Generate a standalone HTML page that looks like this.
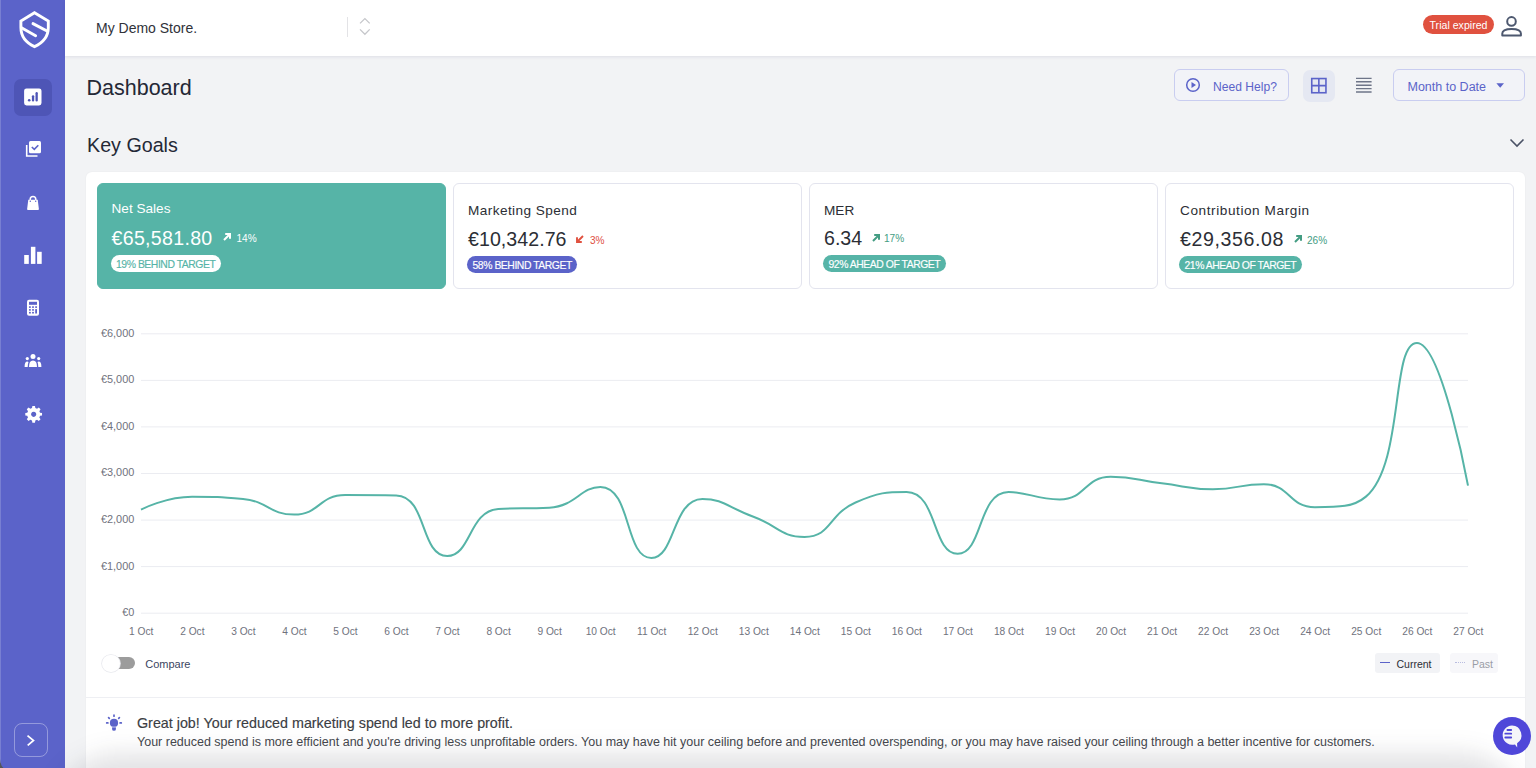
<!DOCTYPE html>
<html><head><meta charset="utf-8">
<style>
*{box-sizing:border-box;margin:0;padding:0}
html,body{width:1536px;height:768px;overflow:hidden;background:#f2f3f5;font-family:"Liberation Sans",sans-serif;color:#2c2e35}
#side{position:absolute;left:0;top:0;width:65px;height:768px;background:#5b63c9}
#hdr{position:absolute;left:65px;top:0;width:1471px;height:56px;background:#fff;box-shadow:0 1px 3px rgba(50,50,110,.10)}
.nav{position:absolute;left:14px;width:38px;height:38px;border-radius:7px}
.nav svg{position:absolute;left:10px;top:10px}
.nav.active{background:#4e55b6}
.t{position:absolute;white-space:nowrap;line-height:1}
.panel{position:absolute;left:86px;top:172px;width:1439px;height:620px;background:#fff;border-radius:6px;box-shadow:0 0 2px rgba(0,0,0,.05)}
.card{position:absolute;top:183px;width:348.6px;height:106px;border-radius:6px;border:1px solid #e3e4ee;background:#fff}
.card.g{background:#56b4a7;border-color:#56b4a7}
.badge{position:absolute;top:254.8px;height:17px;border-radius:9px;font-size:10.4px;line-height:19px;padding:0 5.5px;white-space:nowrap;letter-spacing:-0.45px;-webkit-text-stroke:0.15px currentColor}
.btn{position:absolute;top:69px;height:32px;border:1px solid #c9cdf0;border-radius:6px;background:#f2f3f8}
</style></head><body>
<div id="side">
 <svg style="position:absolute;left:13px;top:8px" width="40" height="44" viewBox="0 0 40 44">
  <path d="M21.5 4.7 L35.3 13.1 L35.3 19.5 C35.3 28.3 30.5 34.5 21.5 38.6 C12.5 34.5 7.9 28.3 7.9 19.5 L7.9 13.1 Z" fill="none" stroke="#fff" stroke-width="2.9" stroke-linejoin="miter"/>
  <path d="M20 15.6 L34.5 23.3 M8.5 19.8 L22.6 27.8" stroke="#fff" stroke-width="2.9" stroke-linecap="round"/>
 </svg>
 <div class="nav active" style="top:78.7px;height:37px"><svg style="left:10px;top:9.6px" width="18" height="18" viewBox="0 0 18 18"><rect x="0.1" y="0.4" width="17.4" height="17" rx="2.4" fill="#fff"/><circle cx="5.2" cy="12.3" r="1.3" fill="#4e55b6"/><rect x="7.9" y="7.2" width="2.3" height="6.4" rx="1.15" fill="#4e55b6"/><rect x="11.5" y="4" width="2.3" height="9.6" rx="1.15" fill="#4e55b6"/></svg></div>
 <div class="nav" style="top:130px"><svg style="left:11px;top:10px" width="18" height="18" viewBox="0 0 18 18"><path d="M1.7 5 V16 H12.5" fill="none" stroke="#fff" stroke-width="1.6"/><rect x="4" y="1" width="12" height="12.3" rx="1.5" fill="#fff"/><path d="M6.8 7 L9.3 9.4 L13.3 5.2" fill="none" stroke="#5b63c9" stroke-width="1.6"/></svg></div>
 <div class="nav" style="top:183px"><svg style="left:10px;top:10px" width="18" height="18" viewBox="0 0 18 18"><path d="M6.2 7.5 V6.2 a2.8 2.8 0 0 1 5.6 0 V7.5" fill="none" stroke="#fff" stroke-width="1.5"/><path d="M4.3 6.8 H13.7 L14.9 16 Q15 16.9 14 16.9 H4 Q3 16.9 3.1 16 Z" fill="#fff"/><circle cx="6.3" cy="8.2" r=".7" fill="#5b63c9"/><circle cx="11.7" cy="8.2" r=".7" fill="#5b63c9"/></svg></div>
 <div class="nav" style="top:236px"><svg style="left:10px;top:10px" width="19" height="18" viewBox="0 0 19 18"><rect x="0.2" y="9" width="4.6" height="8.9" fill="#fff"/><rect x="6.9" y="0.8" width="4.5" height="17.1" fill="#fff"/><rect x="13.1" y="5.8" width="4.6" height="12.1" fill="#fff"/></svg></div>
 <div class="nav" style="top:289px"><svg style="left:10px;top:10px" width="18" height="18" viewBox="0 0 18 18"><rect x="3" y="0.8" width="12" height="16" rx="2" fill="#fff"/><rect x="5" y="2.8" width="8" height="3" fill="#5b63c9"/><g fill="#5b63c9"><rect x="5" y="7.3" width="1.8" height="1.6"/><rect x="8.1" y="7.3" width="1.8" height="1.6"/><rect x="11.2" y="7.3" width="1.8" height="1.6"/><rect x="5" y="10.1" width="1.8" height="1.6"/><rect x="8.1" y="10.1" width="1.8" height="1.6"/><rect x="11.2" y="10.1" width="1.8" height="4.4"/><rect x="5" y="12.9" width="1.8" height="1.6"/><rect x="8.1" y="12.9" width="1.8" height="1.6"/></g></svg></div>
 <div class="nav" style="top:342px"><svg style="left:10px;top:10px" width="18" height="18" viewBox="0 0 18 18"><g fill="#fff"><circle cx="9" cy="4.6" r="2.5"/><circle cx="3.3" cy="6.6" r="1.6"/><circle cx="14.7" cy="6.6" r="1.6"/><path d="M5 15 Q5 8.6 9 8.6 Q13 8.6 13 15 Z"/><path d="M0.6 15 Q0.6 9.6 3.4 9.6 Q4.2 9.6 4.5 10 Q3.7 12 3.7 15 Z"/><path d="M17.4 15 Q17.4 9.6 14.6 9.6 Q13.8 9.6 13.5 10 Q14.3 12 14.3 15 Z"/></g></svg></div>
 <div class="nav" style="top:394px"><svg style="left:10.5px;top:11px" width="18" height="18" viewBox="0 0 18 18"><path fill="#fff" fill-rule="evenodd" transform="translate(0.3,0) scale(0.93)" d="M7.6 1 H10.4 L10.8 3.3 L12.6 4.1 L14.5 2.8 L16.4 4.7 L15.1 6.6 L15.9 8.4 L18 8.6 V11.4 L15.9 11.6 L15.1 13.4 L16.4 15.3 L14.5 17.2 L12.6 15.9 L10.8 16.7 L10.4 19 H7.6 L7.2 16.7 L5.4 15.9 L3.5 17.2 L1.6 15.3 L2.9 13.4 L2.1 11.6 L0 11.4 V8.6 L2.1 8.4 L2.9 6.6 L1.6 4.7 L3.5 2.8 L5.4 4.1 L7.2 3.3 Z M9 7.2 A2.8 2.8 0 1 0 9.001 7.2 Z"/></svg></div>
 <div style="position:absolute;left:14px;top:723px;width:34px;height:34px;border:1px solid rgba(255,255,255,.35);border-radius:8px"></div>
 <svg style="position:absolute;left:26px;top:734px" width="10" height="12" viewBox="0 0 10 12"><path d="M1.5 1.6 L7.5 6.5 L1.7 11.4" fill="none" stroke="#fff" stroke-width="1.7"/></svg>
</div>
<div id="hdr"></div>
<div class="t" style="left:96px;top:20.75px;font-size:14px;color:#303239;">My Demo Store.</div>
<div style="position:absolute;left:347px;top:16.5px;width:1px;height:20px;background:#e3e3e6"></div>
<svg style="position:absolute;left:358px;top:16px" width="14" height="22" viewBox="0 0 14 22"><path d="M2 7.4 L6.9 2.6 L11.7 7.4 M2 13.4 L6.9 18.25 L11.7 13.4" fill="none" stroke="#c6c7cb" stroke-width="1.3"/></svg>
<div style="position:absolute;left:1423px;top:15px;width:71px;height:19px;border-radius:10px;background:#e0513f"></div>
<div class="t" style="left:1423.50px;width:70px;text-align:center;top:19.63px;font-size:10.6px;color:#fff;">Trial expired</div>
<svg style="position:absolute;left:1500px;top:13px" width="24" height="25" viewBox="0 0 24 25"><circle cx="11.5" cy="8.4" r="4.3" fill="none" stroke="#4d586f" stroke-width="2"/><path d="M2.3 22.4 V20.6 Q2.3 15.9 11.6 15.9 Q20.9 15.9 20.9 20.6 V22.4 Z" fill="none" stroke="#4d586f" stroke-width="2" stroke-linejoin="round"/></svg>

<div class="t" style="left:86.5px;top:77.90px;font-size:21.5px;color:#242836;">Dashboard</div>
<div class="btn" style="left:1174px;width:115px"></div>
<svg style="position:absolute;left:1185px;top:77px" width="16" height="16" viewBox="0 0 16 16"><circle cx="8" cy="8" r="6.3" fill="none" stroke="#5b63c9" stroke-width="1.5"/><path d="M6.5 5 L11 8 L6.5 11 Z" fill="#5b63c9"/></svg>
<div class="t" style="left:1213px;top:80.66px;font-size:12.1px;color:#5b63c9;">Need Help?</div>
<div style="position:absolute;left:1302.5px;top:69.5px;width:32px;height:32px;border-radius:7px;background:#e5e8f2"></div>
<svg style="position:absolute;left:1310px;top:77px" width="18" height="17" viewBox="0 0 18 17"><rect x="1.75" y="1.55" width="14.2" height="14.2" fill="none" stroke="#5b63c9" stroke-width="1.6"/><path d="M8.85 1.5 V15.8 M1.7 8.65 H16" stroke="#5b63c9" stroke-width="1.6"/></svg>
<svg style="position:absolute;left:1356px;top:76px" width="16" height="18" viewBox="0 0 16 18"><g stroke="#6e7588" stroke-width="1.4"><path d="M0 2.35 H15.6 M0 5.75 H15.6 M0 9.2 H15.6 M0 12.6 H15.6 M0 16 H15.6"/></g></svg>
<div class="btn" style="left:1393px;width:132px"></div>
<div class="t" style="left:1407.5px;top:80.52px;font-size:12.5px;color:#5b63c9;">Month to Date</div>
<svg style="position:absolute;left:1495px;top:82px" width="10" height="7" viewBox="0 0 10 7"><path d="M1.4 1.2 H9 L5.2 5.8 Z" fill="#5b63c9"/></svg>

<div class="t" style="left:87px;top:135.52px;font-size:19.7px;color:#242836;">Key Goals</div>
<svg style="position:absolute;left:1509px;top:138px" width="16" height="10" viewBox="0 0 16 10"><path d="M1.5 1.5 L8 8 L14.5 1.5" fill="none" stroke="#4a5266" stroke-width="1.6"/></svg>

<div class="panel"></div>
<div class="card g" style="left:97px"></div><div class="t" style="left:111.5px;top:202.29px;font-size:13.6px;color:#fff;letter-spacing:0px">Net Sales</div><div class="t" style="left:111.5px;top:229.01px;font-size:19.6px;color:#fff;letter-spacing:0.3px">€65,581.80</div><svg style="position:absolute;left:221.5px;top:232.3px" width="10" height="10" viewBox="0 0 10 10"><path d="M2 8 L8 2 M3.2 2 H8 V6.8" fill="none" stroke="#fff" stroke-width="2"/></svg><div class="t" style="left:236.5px;top:234.35px;font-size:10.1px;color:#fff;">14%</div><div class="badge" style="left:110.5px;top:254.8px;background:#fff;color:#56b4a7">19% BEHIND TARGET</div><div class="card" style="left:453px"></div><div class="t" style="left:468.0px;top:203.79px;font-size:13.6px;color:#2c2e35;letter-spacing:0.43px">Marketing Spend</div><div class="t" style="left:468.0px;top:230.21px;font-size:19.6px;color:#2c2e35;letter-spacing:0.05px">€10,342.76</div><svg style="position:absolute;left:574.8px;top:233.9px" width="10" height="10" viewBox="0 0 10 10"><path d="M8 2 L2 8 M2 3.2 V8 H6.8" fill="none" stroke="#e0513f" stroke-width="1.9"/></svg><div class="t" style="left:590px;top:235.55px;font-size:10.1px;color:#e0513f;">3%</div><div class="badge" style="left:467.0px;top:256.40000000000003px;background:#5b63c9;color:#fff">58% BEHIND TARGET</div><div class="card" style="left:809px"></div><div class="t" style="left:824.0px;top:203.79px;font-size:13.6px;color:#2c2e35;letter-spacing:0px">MER</div><div class="t" style="left:824.0px;top:228.81px;font-size:19.6px;color:#2c2e35;letter-spacing:0px">6.34</div><svg style="position:absolute;left:870.5px;top:232.60000000000002px" width="10" height="10" viewBox="0 0 10 10"><path d="M2 8 L8 2 M3.2 2 H8 V6.8" fill="none" stroke="#449d83" stroke-width="2"/></svg><div class="t" style="left:884px;top:234.15px;font-size:10.1px;color:#449d83;">17%</div><div class="badge" style="left:823.0px;top:254.8px;background:#56b4a7;color:#fff">92% AHEAD OF TARGET</div><div class="card" style="left:1165px"></div><div class="t" style="left:1180.0px;top:203.79px;font-size:13.6px;color:#2c2e35;letter-spacing:0.58px">Contribution Margin</div><div class="t" style="left:1180.0px;top:230.21px;font-size:19.6px;color:#2c2e35;letter-spacing:0.6px">€29,356.08</div><svg style="position:absolute;left:1292.8px;top:233.60000000000002px" width="10" height="10" viewBox="0 0 10 10"><path d="M2 8 L8 2 M3.2 2 H8 V6.8" fill="none" stroke="#449d83" stroke-width="2"/></svg><div class="t" style="left:1307px;top:235.55px;font-size:10.1px;color:#449d83;">26%</div><div class="badge" style="left:1179.0px;top:256.40000000000003px;background:#56b4a7;color:#fff">21% AHEAD OF TARGET</div>
<svg style="position:absolute;left:0;top:0" width="1536" height="768">
<line x1="141" x2="1468" y1="333.8" y2="333.8" stroke="#ebecf1" stroke-width="1"/><line x1="141" x2="1468" y1="380.4" y2="380.4" stroke="#ebecf1" stroke-width="1"/><line x1="141" x2="1468" y1="426.9" y2="426.9" stroke="#ebecf1" stroke-width="1"/><line x1="141" x2="1468" y1="473.5" y2="473.5" stroke="#ebecf1" stroke-width="1"/><line x1="141" x2="1468" y1="520.1" y2="520.1" stroke="#ebecf1" stroke-width="1"/><line x1="141" x2="1468" y1="566.6" y2="566.6" stroke="#ebecf1" stroke-width="1"/><line x1="141" x2="1468" y1="613.2" y2="613.2" stroke="#ebecf1" stroke-width="1"/>
<path d="M141.00,509.60C141.00,509.60 166.14,496.72 192.04,496.72C217.18,496.72 218.11,496.72 243.08,499.04C269.15,501.47 268.91,514.62 294.12,514.62C319.95,514.62 318.76,494.99 345.15,494.99C369.79,494.99 376.19,494.99 396.19,495.41C427.23,496.06 420.02,556.00 447.23,556.00C471.06,556.00 468.87,510.76 498.27,508.99C519.90,507.69 524.76,508.99 549.31,507.69C575.80,506.28 580.63,486.90 600.35,486.90C631.66,486.90 624.41,558.00 651.38,558.00C675.45,558.00 672.27,498.90 702.42,498.90C723.31,498.90 728.12,507.37 753.46,516.80C779.16,526.37 780.45,536.89 804.50,536.89C831.49,536.89 827.90,514.64 855.54,502.48C878.94,492.18 886.47,491.97 906.58,491.97C937.51,491.97 932.10,553.82 957.62,553.82C983.13,553.82 977.59,491.97 1008.65,491.97C1028.63,491.97 1035.19,499.41 1059.69,499.41C1086.23,499.41 1084.17,476.72 1110.73,476.72C1135.21,476.72 1136.23,480.20 1161.77,483.32C1187.27,486.44 1187.27,489.18 1212.81,489.18C1238.30,489.18 1239.45,484.16 1263.85,484.16C1290.48,484.16 1288.45,507.18 1314.88,507.18C1339.49,507.18 1353.49,507.18 1365.92,496.62C1404.53,463.83 1390.60,342.99 1416.96,342.99C1441.64,342.99 1468.00,485.69 1468.00,485.69" fill="none" stroke="#56b4a7" stroke-width="2"/>
</svg>
<div class="t" style="left:74.30px;width:60px;text-align:right;top:327.67px;font-size:10.9px;color:#6f727d;">€6,000</div><div class="t" style="left:74.30px;width:60px;text-align:right;top:374.24px;font-size:10.9px;color:#6f727d;">€5,000</div><div class="t" style="left:74.30px;width:60px;text-align:right;top:420.81px;font-size:10.9px;color:#6f727d;">€4,000</div><div class="t" style="left:74.30px;width:60px;text-align:right;top:467.38px;font-size:10.9px;color:#6f727d;">€3,000</div><div class="t" style="left:74.30px;width:60px;text-align:right;top:513.95px;font-size:10.9px;color:#6f727d;">€2,000</div><div class="t" style="left:74.30px;width:60px;text-align:right;top:560.52px;font-size:10.9px;color:#6f727d;">€1,000</div><div class="t" style="left:74.30px;width:60px;text-align:right;top:607.09px;font-size:10.9px;color:#6f727d;">€0</div><div class="t" style="left:111.30px;width:60px;text-align:center;top:626.87px;font-size:10.2px;color:#6f727d;">1 Oct</div><div class="t" style="left:162.34px;width:60px;text-align:center;top:626.87px;font-size:10.2px;color:#6f727d;">2 Oct</div><div class="t" style="left:213.38px;width:60px;text-align:center;top:626.87px;font-size:10.2px;color:#6f727d;">3 Oct</div><div class="t" style="left:264.42px;width:60px;text-align:center;top:626.87px;font-size:10.2px;color:#6f727d;">4 Oct</div><div class="t" style="left:315.45px;width:60px;text-align:center;top:626.87px;font-size:10.2px;color:#6f727d;">5 Oct</div><div class="t" style="left:366.49px;width:60px;text-align:center;top:626.87px;font-size:10.2px;color:#6f727d;">6 Oct</div><div class="t" style="left:417.53px;width:60px;text-align:center;top:626.87px;font-size:10.2px;color:#6f727d;">7 Oct</div><div class="t" style="left:468.57px;width:60px;text-align:center;top:626.87px;font-size:10.2px;color:#6f727d;">8 Oct</div><div class="t" style="left:519.61px;width:60px;text-align:center;top:626.87px;font-size:10.2px;color:#6f727d;">9 Oct</div><div class="t" style="left:570.65px;width:60px;text-align:center;top:626.87px;font-size:10.2px;color:#6f727d;">10 Oct</div><div class="t" style="left:621.68px;width:60px;text-align:center;top:626.87px;font-size:10.2px;color:#6f727d;">11 Oct</div><div class="t" style="left:672.72px;width:60px;text-align:center;top:626.87px;font-size:10.2px;color:#6f727d;">12 Oct</div><div class="t" style="left:723.76px;width:60px;text-align:center;top:626.87px;font-size:10.2px;color:#6f727d;">13 Oct</div><div class="t" style="left:774.80px;width:60px;text-align:center;top:626.87px;font-size:10.2px;color:#6f727d;">14 Oct</div><div class="t" style="left:825.84px;width:60px;text-align:center;top:626.87px;font-size:10.2px;color:#6f727d;">15 Oct</div><div class="t" style="left:876.88px;width:60px;text-align:center;top:626.87px;font-size:10.2px;color:#6f727d;">16 Oct</div><div class="t" style="left:927.92px;width:60px;text-align:center;top:626.87px;font-size:10.2px;color:#6f727d;">17 Oct</div><div class="t" style="left:978.95px;width:60px;text-align:center;top:626.87px;font-size:10.2px;color:#6f727d;">18 Oct</div><div class="t" style="left:1029.99px;width:60px;text-align:center;top:626.87px;font-size:10.2px;color:#6f727d;">19 Oct</div><div class="t" style="left:1081.03px;width:60px;text-align:center;top:626.87px;font-size:10.2px;color:#6f727d;">20 Oct</div><div class="t" style="left:1132.07px;width:60px;text-align:center;top:626.87px;font-size:10.2px;color:#6f727d;">21 Oct</div><div class="t" style="left:1183.11px;width:60px;text-align:center;top:626.87px;font-size:10.2px;color:#6f727d;">22 Oct</div><div class="t" style="left:1234.15px;width:60px;text-align:center;top:626.87px;font-size:10.2px;color:#6f727d;">23 Oct</div><div class="t" style="left:1285.18px;width:60px;text-align:center;top:626.87px;font-size:10.2px;color:#6f727d;">24 Oct</div><div class="t" style="left:1336.22px;width:60px;text-align:center;top:626.87px;font-size:10.2px;color:#6f727d;">25 Oct</div><div class="t" style="left:1387.26px;width:60px;text-align:center;top:626.87px;font-size:10.2px;color:#6f727d;">26 Oct</div><div class="t" style="left:1438.30px;width:60px;text-align:center;top:626.87px;font-size:10.2px;color:#6f727d;">27 Oct</div>
<div style="position:absolute;left:107px;top:657.2px;width:28px;height:12px;border-radius:6px;background:#9c9c9c"></div>
<div style="position:absolute;left:102.3px;top:654.5px;width:17.5px;height:17.5px;border-radius:9px;background:#fff;box-shadow:0 0 0 0.8px #e8e9ee"></div>
<div class="t" style="left:145.2px;top:658.59px;font-size:11px;color:#3b4561;">Compare</div>
<div style="position:absolute;left:1375px;top:653px;width:65px;height:20px;border-radius:3px;background:#f2f3f6"></div>
<div style="position:absolute;left:1380px;top:662px;width:10px;height:1.2px;background:#5b63c9"></div>
<div class="t" style="left:1396.5px;top:658.71px;font-size:10.5px;color:#2c2e35;">Current</div>
<div style="position:absolute;left:1450px;top:653px;width:48px;height:20px;border-radius:3px;background:#f7f7fa"></div>
<div style="position:absolute;left:1455px;top:662px;width:10px;height:1px;border-top:1px dotted #b9bce0"></div>
<div class="t" style="left:1472px;top:658.71px;font-size:10.5px;color:#9a9da6;">Past</div>

<div style="position:absolute;left:86px;top:697px;width:1439px;height:1px;background:#eeeff3"></div>
<svg style="position:absolute;left:105px;top:713.5px" width="18" height="18" viewBox="0 0 18 18"><g fill="#5b63c9"><circle cx="9" cy="8.9" r="4.1"/><rect x="7.1" y="12.4" width="3.8" height="1.1" fill="#a4a8e2"/><path d="M7.1 13.6 H10.9 V15.2 A1.9 1.5 0 0 1 7.1 15.2 Z"/></g><g stroke="#5b63c9" stroke-width="1.7" stroke-linecap="round"><path d="M9 1.2 V2.2 M1.7 8.9 H2.9 M15.1 8.9 H16.3 M3.6 3.6 L4.3 4.3 M14.4 3.6 L13.7 4.3"/></g></svg>
<div class="t" style="left:137px;top:715.90px;font-size:14.3px;color:#3b3d43;-webkit-text-stroke:0.15px #3b3d43">Great job! Your reduced marketing spend led to more profit.</div>
<div class="t" style="left:137px;top:735.92px;font-size:12.5px;color:#45474d;">Your reduced spend is more efficient and you're driving less unprofitable orders. You may have hit your ceiling before and prevented overspending, or you may have raised your ceiling through a better incentive for customers.</div>
<div style="position:absolute;left:0;top:0;width:1536px;height:768px;overflow:hidden;pointer-events:none"><div style="position:absolute;left:50px;top:753px;width:1478px;height:220px;border-radius:70px;background:rgba(30,35,50,.125);filter:blur(12px)"></div></div>
<div style="position:absolute;left:1493px;top:717px;width:38px;height:38px;border-radius:19px;background:#4f47d9"></div>
<svg style="position:absolute;left:1493px;top:717px" width="38" height="38" viewBox="0 0 38 38"><path d="M19 8.6 A9.6 9.6 0 1 0 22 27.4 L24.2 30.4 L24.1 26.2 A9.6 9.6 0 0 0 19 8.6 Z" fill="#f5f5f9"/><g stroke="#4f47d9" stroke-width="1.8" stroke-linecap="round"><path d="M14.4 13 H18.2 M12.3 16.7 H18.2 M12.3 20.5 H18.2"/></g></svg>
<div style="position:absolute;left:0;top:0;width:1px;height:768px;background:rgba(255,255,255,.18)"></div>
<svg style="position:absolute;left:0;top:756px" width="12" height="12" viewBox="0 0 12 12"><path d="M0 3 Q0.4 9.5 3.5 12 H0 Z" fill="#55565a"/></svg>
</body></html>
